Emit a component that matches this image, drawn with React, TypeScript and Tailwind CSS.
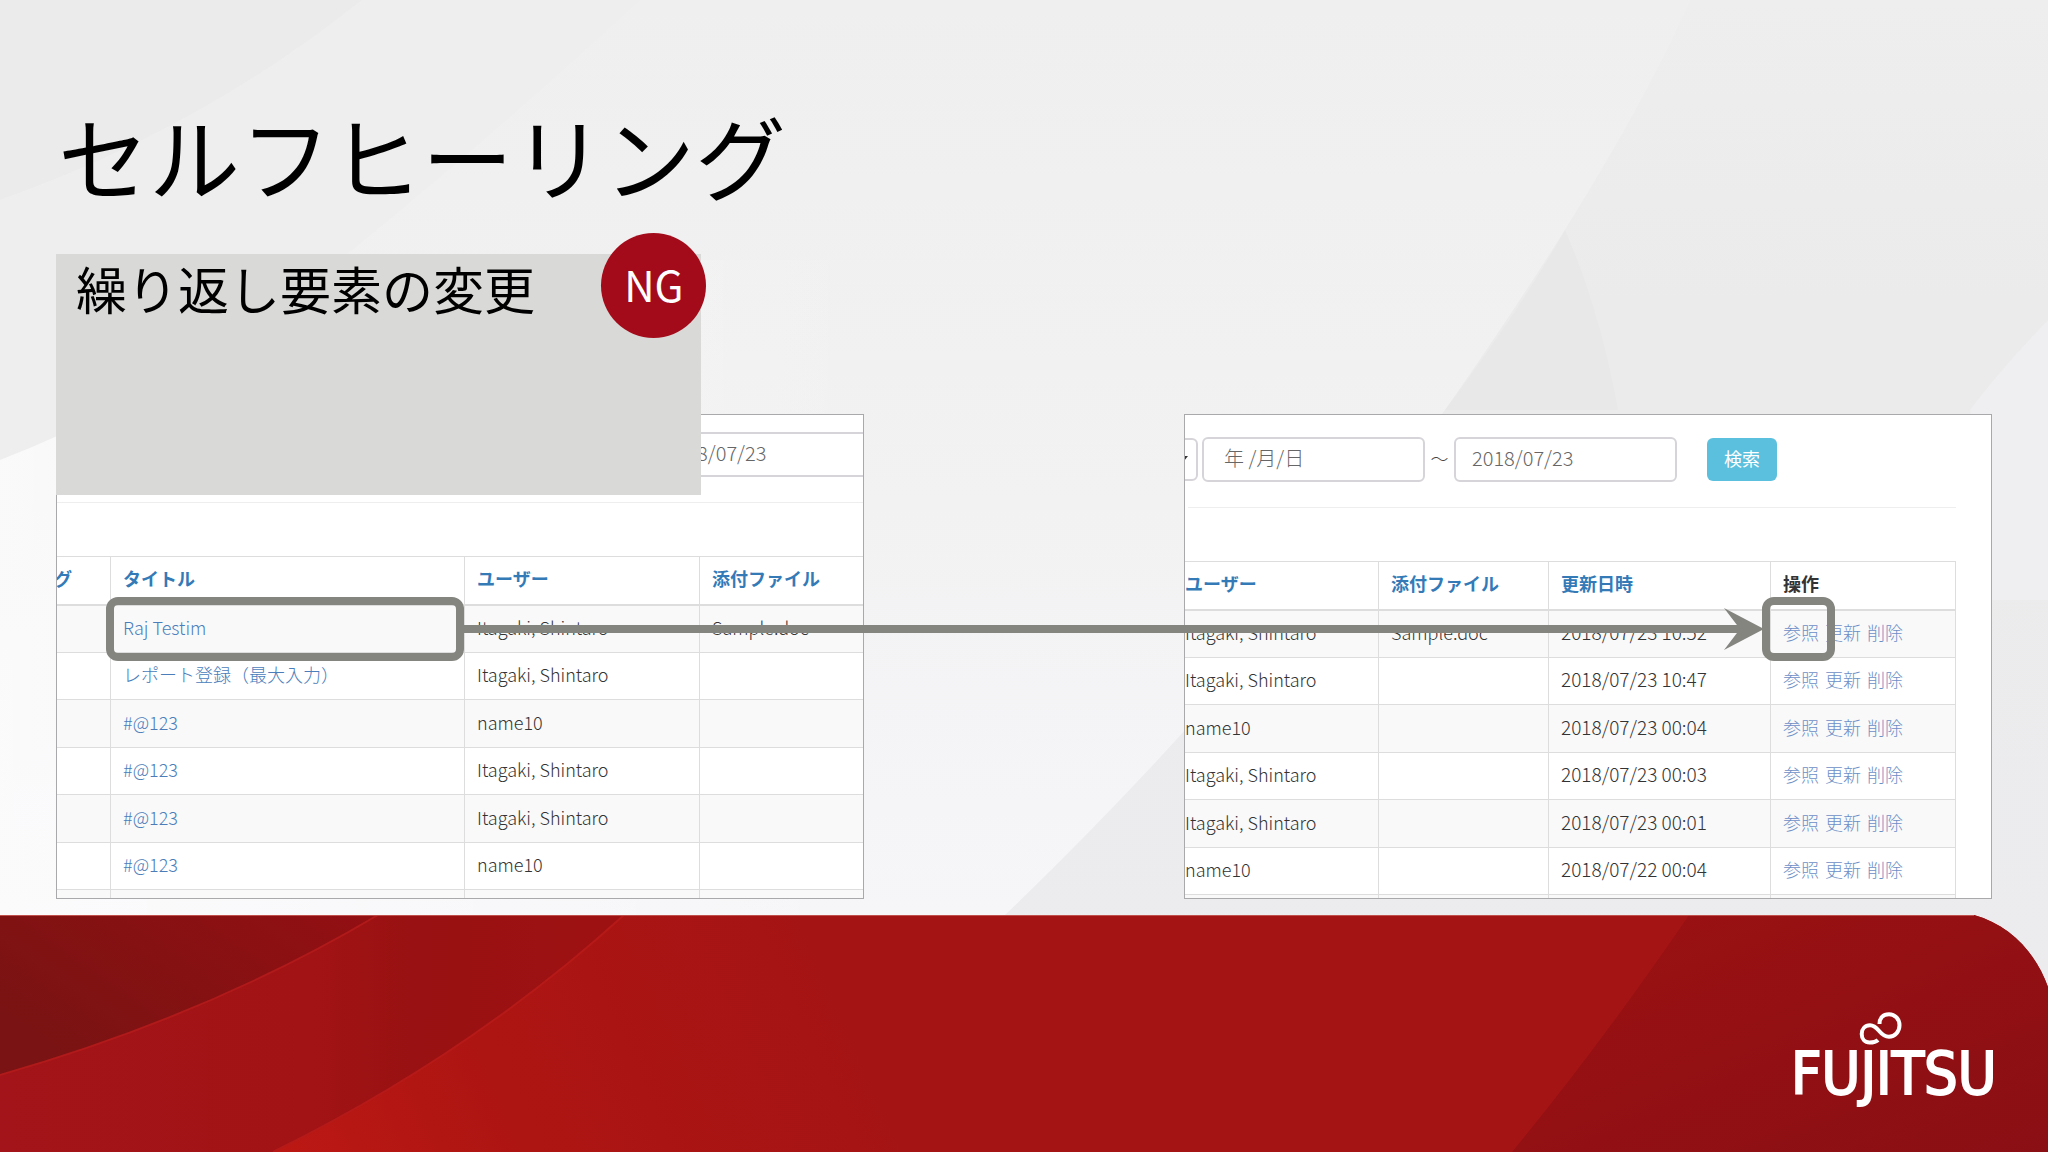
import React from 'react';
import clsx from 'clsx';

const CJK = "font-['Noto_Sans_CJK_JP',sans-serif]";

type Row = { title?: string; user: string; file?: string; date?: string };

const BEFORE_ROWS: Row[] = [
  { title: 'Raj Testim', user: 'Itagaki, Shintaro', file: 'Sample.doc' },
  { title: 'レポート登録（最大入力）', user: 'Itagaki, Shintaro' },
  { title: '#@123', user: 'name10' },
  { title: '#@123', user: 'Itagaki, Shintaro' },
  { title: '#@123', user: 'Itagaki, Shintaro' },
  { title: '#@123', user: 'name10' },
];

const AFTER_ROWS: Row[] = [
  { user: 'Itagaki, Shintaro', file: 'Sample.doc', date: '2018/07/23 10:52' },
  { user: 'Itagaki, Shintaro', date: '2018/07/23 10:47' },
  { user: 'name10', date: '2018/07/23 00:04' },
  { user: 'Itagaki, Shintaro', date: '2018/07/23 00:03' },
  { user: 'Itagaki, Shintaro', date: '2018/07/23 00:01' },
  { user: 'name10', date: '2018/07/22 00:04' },
];

const ACTIONS = ['参照', '更新', '削除'];

const cell = 'border border-[#dddddd] px-3 pt-0 pb-1 text-left align-middle whitespace-nowrap';
const rowStyle = 'odd:h-[48px] even:h-[47px] odd:bg-[#f9f9fa]';
const inputStyle = 'h-[45px] w-[223px] shrink-0 rounded-md border-2 border-[#d6d4d8] bg-white pb-1 text-xl font-light text-[#666666]';

// Pale folded-paper backdrop behind the whole slide
const Backdrop: React.FC = () => (
  <svg className="absolute inset-0 h-full w-full" viewBox="0 0 2048 1152" preserveAspectRatio="none" aria-hidden="true">
    <defs>
      <linearGradient id="paper" x1="0" y1="0" x2="0" y2="915" gradientUnits="userSpaceOnUse">
        <stop offset="0" stopColor="#efefef" />
        <stop offset="0.4" stopColor="#f1f1f1" />
        <stop offset="1" stopColor="#f6f5f8" />
      </linearGradient>
      <linearGradient id="glow" x1="0" y1="0" x2="1" y2="0">
        <stop offset="0" stopColor="#ffffff" stopOpacity="0.6" />
        <stop offset="0.8" stopColor="#ffffff" stopOpacity="0" />
      </linearGradient>
      <linearGradient id="fold" x1="0" y1="0" x2="0" y2="1">
        <stop offset="0" stopColor="#eeeeee" />
        <stop offset="0.3" stopColor="#ebebeb" />
        <stop offset="1" stopColor="#ecebee" />
      </linearGradient>
    </defs>
    <rect width="2048" height="1152" fill="url(#paper)" />
    <path d="M0 0H362Q200 130 0 200Z" fill="#ebebeb" />
    <path d="M0 200Q200 130 362 0H640Q500 130 340 260Q180 390 0 460Z" fill="#eeeeee" />
    <path d="M0 460Q180 390 340 260H1100V915H0Z" fill="url(#glow)" />
    <path d="M1005 915Q1250 680 1445 410Q1620 160 1690 0H2048V1000H1005Z" fill="url(#fold)" />
    <path d="M1445 410Q1520 310 1565 230Q1600 310 1618 410Z" fill="#e9e8e9" />
    <path d="M2048 320Q2000 370 1970 410L1992 600H2048Z" fill="#efeef0" />
  </svg>
);

const RedBand: React.FC = () => (
  <svg className="absolute inset-0 h-full w-full" viewBox="0 0 2048 237" preserveAspectRatio="none" aria-hidden="true">
    <defs>
      <linearGradient id="main" x1="273" y1="237" x2="800" y2="0" gradientUnits="userSpaceOnUse">
        <stop offset="0" stopColor="#bc1814" />
        <stop offset="0.4" stopColor="#ad1512" />
        <stop offset="1" stopColor="#a51414" />
      </linearGradient>
      <linearGradient id="dark" x1="0" y1="0.6" x2="1" y2="0">
        <stop offset="0" stopColor="#7a1313" />
        <stop offset="1" stopColor="#930f12" />
      </linearGradient>
      <linearGradient id="mid" x1="0" y1="0" x2="1" y2="0">
        <stop offset="0" stopColor="#a21419" />
        <stop offset="0.5" stopColor="#a21315" />
        <stop offset="0.66" stopColor="#991112" />
        <stop offset="1" stopColor="#9e1113" />
      </linearGradient>
      <linearGradient id="right" x1="0" y1="0" x2="1" y2="1">
        <stop offset="0" stopColor="#9c1112" />
        <stop offset="1" stopColor="#8a0f14" />
      </linearGradient>
    </defs>
    <path d="M0 0H1974C2010 10 2036 38 2048 72V237H0Z" fill="url(#main)" />
    <path d="M1689 0H1974C2010 10 2036 38 2048 72V237H1512Q1600 130 1689 0Z" fill="url(#right)" />
    <path d="M0 0H624Q470 140 273 237H0Z" fill="url(#mid)" />
    <path d="M624 0Q470 140 273 237" fill="none" stroke="#b51a18" strokeWidth="2" />
    <path d="M0 0H378Q210 100 0 160Z" fill="url(#dark)" />
    <path d="M378 0Q210 100 0 160" fill="none" stroke="#b01a1a" strokeWidth="2" />
    <path d="M0 0.5H1974" stroke="#c0504c" strokeWidth="1" />
  </svg>
);

const FujitsuLogo: React.FC = () => (
  <svg className="h-[110px] w-[204px] overflow-visible" viewBox="0 0 204 110" role="img" aria-label="FUJITSU">
    <path
      d="M84 28C81.500 30.500 78.500 30.500 75.500 30.500C71 30.500 67.700 27 67.700 22C67.700 17 71 13.300 76 13.300C85 13.300 85 24.700 95 24.700C101 24.700 105.500 19.500 105.500 13.300C105.500 7 101 2.200 95 2.200C89 2.200 85.500 6 85.500 12"
      fill="none"
      stroke="#fff"
      strokeWidth="4"
    />
    <text x="-3" y="82" className="font-['DejaVu_Sans_Condensed']" fontSize="59" fill="#fff" stroke="#fff" strokeWidth="2">
      FUJITSU
    </text>
  </svg>
);

const Ring: React.FC<{ className: string }> = ({ className }) => (
  <span className={clsx('pointer-events-none absolute z-10 h-16 rounded-xl border-8 border-[#84857f]', className)} />
);

const BeforePanel: React.FC = () => (
  <section className="h-[485px] min-w-0 flex-1 overflow-hidden border border-[#a9a8aa] bg-white pt-[17px]">
    <div className="flex">
      <input aria-label="終了日" defaultValue="2018/07/23" className={clsx(inputStyle, 'ml-[590px] px-4')} />
    </div>
    <hr className="mt-[25px] border-[#eeeeee]" />
    <table className="mt-[53px] -ml-4 w-[828px] table-fixed border-collapse text-lg">
      <colgroup>
        <col className="w-[69px]" />
        <col className="w-[354px]" />
        <col className="w-[235px]" />
        <col className="w-[170px]" />
      </colgroup>
      <thead>
        <tr className="h-[48px] text-[#337ab7]">
          {['グ', 'タイトル', 'ユーザー', '添付ファイル'].map((h) => (
            <th key={h} className={clsx(cell, 'border-b-2 font-bold')}>{h}</th>
          ))}
        </tr>
      </thead>
      <tbody className="font-light text-[#333333]">
        {BEFORE_ROWS.map((row, i) => (
          <tr key={i} className={rowStyle}>
            <td className={cell}></td>
            <td className={cell}>
              <a href="#detail" className="text-[#4a7dba]">{row.title}</a>
            </td>
            <td className={cell}>{row.user}</td>
            <td className={cell}>{row.file}</td>
          </tr>
        ))}
        <tr className={rowStyle}>
          <td className={cell}></td>
          <td className={cell}></td>
          <td className={cell}></td>
          <td className={cell}></td>
        </tr>
      </tbody>
    </table>
  </section>
);

const AfterPanel: React.FC = () => (
  <section className="h-[485px] min-w-0 flex-1 overflow-hidden border border-[#a9a8aa] bg-white pt-[22px]">
    <div className="flex items-center">
      <div className="relative mr-1 -ml-[47px] shrink-0">
        <select aria-label="条件" className="block h-[43px] w-[60px] appearance-none rounded-md border-2 border-[#d6d4d8] bg-white" />
        <svg className="absolute top-[18px] right-[10px] h-[5px] w-[8px]" viewBox="0 0 8 5" aria-hidden="true">
          <path d="M0 0H8L4 5Z" fill="#333" />
        </svg>
      </div>
      <input aria-label="開始日" defaultValue="年 /月/日" className={clsx(inputStyle, 'px-5')} />
      <span className="w-[29px] shrink-0 pb-1 text-center text-lg font-light text-[#444444]">～</span>
      <input aria-label="終了日" defaultValue="2018/07/23" className={clsx(inputStyle, 'px-4')} />
      <button type="button" className="ml-[30px] h-[43px] w-[70px] shrink-0 rounded-md bg-[#5bc0de] pb-1 text-lg text-white">
        検索
      </button>
    </div>
    <hr className="mt-[25px] mr-[35px] ml-[3px] border-[#eeeeee]" />
    <table className="mt-[53px] -ml-[13px] w-[783px] table-fixed border-collapse text-lg">
      <colgroup>
        <col className="w-[206px]" />
        <col className="w-[170px]" />
        <col className="w-[222px]" />
        <col className="w-[185px]" />
      </colgroup>
      <thead>
        <tr className="h-[48px] text-[#337ab7]">
          {['ユーザー', '添付ファイル', '更新日時', '操作'].map((h) => (
            <th key={h} className={clsx(cell, 'border-b-2 font-bold', h === '操作' && 'text-[#333333]')}>{h}</th>
          ))}
        </tr>
      </thead>
      <tbody className="font-light text-[#333333]">
        {AFTER_ROWS.map((row, i) => (
          <tr key={i} className={rowStyle}>
            <td className={cell}>{row.user}</td>
            <td className={cell}>{row.file}</td>
            <td className={clsx(cell, 'text-[19px]')}>{row.date}</td>
            <td className={cell}>
              {ACTIONS.map((action) => (
                <a key={action} href="#action" className="mr-[6px] text-[#6d8fc6]">{action}</a>
              ))}
            </td>
          </tr>
        ))}
        <tr className={rowStyle}>
          <td className={cell}></td>
          <td className={cell}></td>
          <td className={cell}></td>
          <td className={cell}></td>
        </tr>
      </tbody>
    </table>
  </section>
);

const App: React.FC = () => {
  return (
    <div className={clsx('relative flex min-h-screen w-full flex-col overflow-hidden', CJK)}>
      <Backdrop />

      <main className="relative px-14 pt-[106px]">
        <h1 className="pl-[2px] text-[91px] leading-[96px] text-black">セルフヒーリング</h1>

        <div className="relative z-20 mt-[52px] -mb-[81px] h-[241px] w-1/3 bg-[#d9d9d7] px-5 pt-[2px]">
          <h2 className="text-[51px] leading-[64px] text-black">繰り返し要素の変更</h2>
          <span className="absolute -top-[21px] -right-[5px] flex size-[105px] items-center justify-center rounded-full bg-[#a30b1a] pb-1 text-[42px] text-white">
            NG
          </span>
        </div>

        <div className="relative flex gap-80">
          <BeforePanel />
          <AfterPanel />

          {/* recorded element -> element picked after the change */}
          <Ring className="top-[183px] left-[50px] w-[358px]" />
          <Ring className="top-[183px] right-[157px] w-[73px]" />
          <div className="pointer-events-none absolute top-[194px] right-[228px] left-[408px] flex items-center">
            <div className="-mr-[26px] h-2 flex-1 bg-[#84857f]" />
            <svg className="h-[42px] w-[40px] shrink-0" viewBox="0 0 40 42" aria-hidden="true">
              <path d="M0 0L40 21L0 42L16 21Z" fill="#84857f" />
            </svg>
          </div>
        </div>
      </main>

      <footer className="relative mt-4 flex flex-1 items-end justify-end">
        <RedBand />
        <div className="relative mr-[50px] mb-[30px]">
          <FujitsuLogo />
        </div>
      </footer>
    </div>
  );
};

export default App;
